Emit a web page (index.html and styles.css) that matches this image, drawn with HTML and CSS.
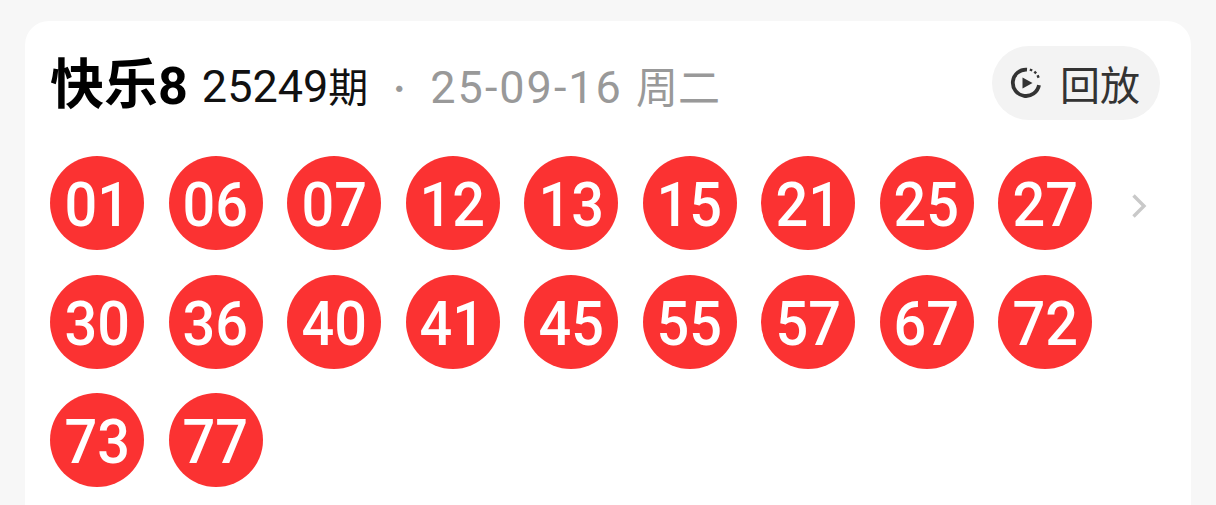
FILE: index.html
```html
<!DOCTYPE html>
<html lang="zh">
<head>
<meta charset="utf-8">
<title>快乐8</title>
<link rel="stylesheet" href="styles.css">
</head>
<body>
<main class="card">
  <header class="head">
    <h1 class="title">快乐<span class="title-num">8</span></h1>
    <span class="issue">25249<span class="cjk">期</span></span>
    <span class="dot">·</span>
    <span class="date">25-09-16 <span class="cjk">周二</span></span>
    <button class="replay">
      <svg class="replay-icon" viewBox="0 0 32 32" aria-hidden="true">
        <path d="M17 2.6A13.2 13.2 0 1 0 29 18.2" fill="none" stroke="#333" stroke-width="3.8"/>
        <path d="M20.6 4l.9-2M24.4 6.4l1.7-1.7M27 10l2.2-1" fill="none" stroke="#333" stroke-width="2.6"/>
        <path d="M12.5 10.5L22.5 16l-10 5.5z" fill="#333"/>
      </svg>
      <span>回放</span>
    </button>
  </header>
  <section class="body">
    <div class="balls">
      <div class="ball"><span>01</span></div>
      <div class="ball"><span>06</span></div>
      <div class="ball"><span>07</span></div>
      <div class="ball"><span>12</span></div>
      <div class="ball"><span>13</span></div>
      <div class="ball"><span>15</span></div>
      <div class="ball"><span>21</span></div>
      <div class="ball"><span>25</span></div>
      <div class="ball"><span>27</span></div>
      <div class="ball"><span>30</span></div>
      <div class="ball"><span>36</span></div>
      <div class="ball"><span>40</span></div>
      <div class="ball"><span>41</span></div>
      <div class="ball"><span>45</span></div>
      <div class="ball"><span>55</span></div>
      <div class="ball"><span>57</span></div>
      <div class="ball"><span>67</span></div>
      <div class="ball"><span>72</span></div>
      <div class="ball"><span>73</span></div>
      <div class="ball"><span>77</span></div>
    </div>
    <svg class="chev" viewBox="0 0 16 26" aria-hidden="true">
      <path d="M2.5 2.5L13 13 2.5 23.5" fill="none" stroke="#c9c9c9" stroke-width="3.4"/>
    </svg>
  </section>
</main>
</body>
</html>
```

FILE: styles.css
```css
* { box-sizing: border-box; }
html, body { margin: 0; height: 505px; overflow: hidden; }
body {
  background: #f7f7f7;
  padding: 21px 25px 0;
  font-family: "Noto Sans CJK SC", "Roboto", sans-serif;
}
.card {
  background: #fff;
  border-radius: 24px 24px 0 0;
  height: 484px;
  padding: 25px 31px 0 25px;
}
.head {
  display: flex;
  align-items: center;
  height: 74px;
}
.title {
  margin: 0;
  padding-top: 2px;
  font-size: 54px;
  font-weight: 700;
  line-height: 60px;
  color: #000;
}
.title-num {
  font-family: "Roboto", sans-serif;
  font-size: 52px;
  font-weight: 700;
}
.issue {
  margin: 6px 0 0 14px;
  font-family: "Roboto", sans-serif;
  font-size: 45px;
  color: #111;
  line-height: 60px;
}
.issue .cjk {
  font-family: "Noto Sans CJK SC", sans-serif;
  font-size: 40px;
}
.dot {
  margin: 8px 0 0 16px;
  font-size: 30px;
  color: #999;
}
.date {
  margin: 6px 0 0 16px;
  font-family: "Roboto", sans-serif;
  font-size: 45px;
  color: #999;
  line-height: 60px;
  letter-spacing: 2px;
}
.date .cjk {
  font-family: "Noto Sans CJK SC", sans-serif;
  font-size: 42px;
  letter-spacing: 0;
}
.replay {
  margin-left: auto;
  display: flex;
  align-items: center;
  gap: 18px;
  width: 168px;
  height: 74px;
  padding: 0 0 0 18px;
  border: 0;
  border-radius: 37px;
  background: #f3f3f3;
  font: inherit;
  font-size: 40px;
  color: #333;
}
.replay-icon { width: 32px; height: 32px; flex: none; }
.body {
  display: flex;
  align-items: flex-start;
  margin-top: 36px;
}
.balls {
  display: grid;
  grid-template-columns: repeat(9, 94px);
  grid-auto-rows: 94px;
  column-gap: 24.5px;
  row-gap: 24.5px;
}
.ball {
  display: flex;
  align-items: center;
  justify-content: center;
  border-radius: 50%;
  background: #fb3232;
  color: #fff;
  font-family: "Roboto", sans-serif;
  font-weight: 500;
  font-size: 62px;
  line-height: 1;
  padding-top: 4px;
}
.ball span { display: block; transform: scaleX(0.93); }
.chev {
  width: 16px;
  height: 26px;
  margin: 37px 0 0 39px;
  flex: none;
}
```
